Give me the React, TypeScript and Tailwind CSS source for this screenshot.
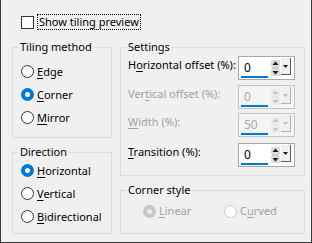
import React from "react";

function Mn({ text, at }: { text: string; at: number }) {
  if (at < 0) return <>{text}</>;
  return (
    <>
      {text.slice(0, at)}
      <u className="underline underline-offset-[2px] decoration-1">{text[at]}</u>
      {text.slice(at + 1)}
    </>
  );
}

function Radio({
  label,
  at,
  checked = false,
  disabled = false,
}: {
  label: string;
  at: number;
  checked?: boolean;
  disabled?: boolean;
}) {
  let dot;
  if (checked && !disabled) {
    dot = (
      <span className="w-[13px] h-[13px] rounded-full bg-[#0078d7] flex items-center justify-center shrink-0">
        <span className="w-[5px] h-[5px] rounded-full bg-white" />
      </span>
    );
  } else if (checked) {
    dot = (
      <span className="w-[13px] h-[13px] rounded-full bg-[#c8c8c8] flex items-center justify-center shrink-0">
        <span className="w-[5px] h-[5px] rounded-full bg-[#ececec]" />
      </span>
    );
  } else {
    dot = (
      <span
        className={
          disabled
            ? "w-[13px] h-[13px] rounded-full border border-[#cccccc] bg-white shrink-0"
            : "w-[13px] h-[13px] rounded-full border border-[#333333] bg-white shrink-0"
        }
      />
    );
  }
  return (
    <div className="flex items-center gap-[3px]">
      {dot}
      <span className={disabled ? "text-[#a0a0a0] whitespace-nowrap" : "text-black whitespace-nowrap"}>
        <Mn text={label} at={at} />
      </span>
    </div>
  );
}

function Arrows({ disabled }: { disabled: boolean }) {
  const c = disabled ? "#c4c4c4" : "#1a1a1a";
  const bar = disabled ? "#dcdcdc" : "#9a9a9a";
  return (
    <svg width="9" height="18" viewBox="0 0 9 18" className="shrink-0">
      <rect x="0" y="1" width="9" height="7" fill={bar} opacity="0.35" />
      <path d="M4.5 2.5 L7.5 6 L1.5 6 Z" fill={c} />
      <rect x="1" y="8.5" width="7" height="1" fill={bar} />
      <rect x="0" y="10" width="9" height="7" fill={bar} opacity="0.35" />
      <path d="M1.5 12 L7.5 12 L4.5 15.5 Z" fill={c} />
    </svg>
  );
}

function Spin({ value, disabled = false }: { value: string; disabled?: boolean }) {
  return (
    <div
      className={
        disabled
          ? "w-[57px] h-[24px] border border-[#c4c4c4] bg-[#f4f4f4] flex shrink-0"
          : "w-[57px] h-[24px] border border-[#a9a9a9] bg-white flex shrink-0"
      }
    >
      <div className="relative w-[31px] h-full">
        <span
          className={
            disabled
              ? "absolute left-[5px] top-[3px] text-[12px] text-[#a9a9a9]"
              : "absolute left-[5px] top-[3px] text-[12px] text-black"
          }
        >
          {value}
        </span>
        <span className="absolute left-[2px] bottom-[1px] w-[27px] h-[2px] bg-[#0078d7]" />
      </div>
      <div className="w-[11px] flex items-start pt-[2px] pl-[1px]">
        <Arrows disabled={disabled} />
      </div>
      <div className="w-[12px] flex items-start pt-[1px] pb-[3px]">
        <div
          className={
            disabled
              ? "w-[10px] h-[17px] bg-[#f0f0f0] border-r border-b border-[#b4b4b4] flex justify-center pt-[7px]"
              : "w-[10px] h-[17px] bg-[#f0f0f0] border-r border-b border-[#5a5a5a] flex justify-center pt-[7px]"
          }
        >
          <svg width="5" height="3" viewBox="0 0 5 3">
            <path d="M0 0 L5 0 L2.5 3 Z" fill={disabled ? "#bdbdbd" : "#1a1a1a"} />
          </svg>
        </div>
      </div>
    </div>
  );
}

function Row({
  label,
  at,
  value,
  disabled = false,
  className = "",
}: {
  label: string;
  at: number;
  value: string;
  disabled?: boolean;
  className?: string;
}) {
  return (
    <div className={"flex items-start justify-between h-[24px] " + className}>
      <span className={disabled ? "text-[#a0a0a0] whitespace-nowrap pt-[1px]" : "text-black whitespace-nowrap pt-[1px]"}>
        <Mn text={label} at={at} />
      </span>
      <Spin value={value} disabled={disabled} />
    </div>
  );
}

export default function App() {
  return (
    <div className="w-[312px] h-[243px] bg-[#f0f0f0] border-l border-r border-b border-[#3a3a3a] pl-[11px] pr-[6px] pt-[14px] font-['Noto_Sans',sans-serif] text-[11px] leading-[16px] text-black overflow-hidden">
      <div className="flex items-start h-[16px] pl-[9px]">
        <span className="mt-[2px] w-[13px] h-[13px] border border-[#333333] bg-white shrink-0" />
        <span className="ml-[3px] px-[1px] h-[16px] border border-dotted border-black leading-[14px] whitespace-nowrap">
          Show tiling preview
        </span>
      </div>

      <div className="flex gap-[8px] mt-[9px]">
        <div className="w-[100px] flex flex-col gap-[6px]">
          <fieldset className="h-[99px] border border-[#dcdcdc] px-[5px] pt-[5px]">
            <legend className="px-[2px]">Tiling method</legend>
            <div className="pl-[3px] flex flex-col">
              <div className="h-[23px] flex items-center">
                <Radio label="Edge" at={0} />
              </div>
              <div className="h-[23px] flex items-center">
                <Radio label="Corner" at={0} checked />
              </div>
              <div className="h-[23px] flex items-center">
                <Radio label="Mirror" at={0} />
              </div>
            </div>
          </fieldset>
          <fieldset className="h-[90px] border border-[#dcdcdc] px-[5px]">
            <legend className="px-[2px]">Direction</legend>
            <div className="pl-[3px] flex flex-col -mt-[1px]">
              <div className="h-[23px] flex items-center">
                <Radio label="Horizontal" at={0} checked />
              </div>
              <div className="h-[23px] flex items-center">
                <Radio label="Vertical" at={0} />
              </div>
              <div className="h-[23px] flex items-center">
                <Radio label="Bidirectional" at={0} />
              </div>
            </div>
          </fieldset>
        </div>

        <div className="w-[185px] flex flex-col gap-[6px]">
          <fieldset className="h-[137px] border border-[#dcdcdc] pl-[5px] pr-[9px] pt-[1px]">
            <legend className="px-[2px]">Settings</legend>
            <div className="pl-[2px] flex flex-col">
              <Row label="Horizontal offset (%):" at={1} value="0" />
              <Row label="Vertical offset (%):" at={3} value="0" disabled className="mt-[5px]" />
              <Row label="Width (%):" at={0} value="50" disabled className="mt-[4px]" />
              <Row label="Transition (%):" at={0} value="0" className="mt-[6px]" />
            </div>
          </fieldset>
          <fieldset className="h-[52px] border border-[#dcdcdc] px-[5px] pt-[3px]">
            <legend className="px-[2px]">Corner style</legend>
            <div className="flex items-center h-[20px] pl-[17px]">
              <div className="w-[81px]">
                <Radio label="Linear" at={0} checked disabled />
              </div>
              <Radio label="Curved" at={1} disabled />
            </div>
          </fieldset>
        </div>
      </div>
    </div>
  );
}
